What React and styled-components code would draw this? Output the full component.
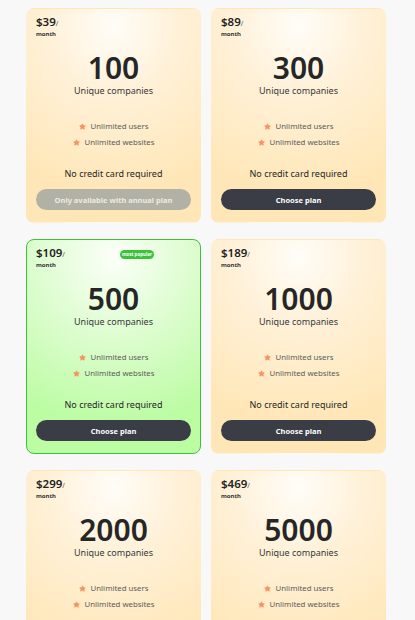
import React from "react";
import styled, { createGlobalStyle } from "styled-components";

const GlobalStyle = createGlobalStyle`
  body {
    margin: 0;
    background: #f8f8f8;
    font-family: "Noto Sans", "Open Sans", sans-serif;
    color: #2a2a2a;
  }
`;

const Grid = styled.div`
  display: grid;
  grid-template-columns: repeat(2, 175px);
  column-gap: 10px;
  row-gap: 16px;
  padding: 8px 0 20px 26px;
`;

const Card = styled.div`
  position: relative;
  height: 215px;
  box-sizing: border-box;
  border-radius: 8px;
  padding: 6px 9px 12px;
  display: flex;
  flex-direction: column;
  border: 1px solid ${(p) => (p.$popular ? "#3dc23a" : "transparent")};
  background: ${(p) =>
    p.$popular
      ? "radial-gradient(ellipse 95% 80% at 50% 8%, #fbfff8 0%, #e2fdd6 40%, #bcfca3 100%)"
      : "radial-gradient(ellipse 95% 80% at 50% 8%, #fffdf8 0%, #fff1d8 40%, #ffe6b6 100%)"};
`;

const Price = styled.div`
  font-size: 11.5px;
  font-weight: 600;
  line-height: 14px;
  color: #222;

  span {
    font-size: 7px;
    font-weight: 400;
    color: #555;
  }
`;

const Period = styled.div`
  font-size: 6px;
  font-weight: 700;
  line-height: 7px;
  color: #333;
`;

const Badge = styled.div`
  position: absolute;
  top: 10px;
  left: 93px;
  width: 34px;
  height: 9px;
  border-radius: 5px;
  background: #3cc13a;
  color: #fff;
  font-size: 4.5px;
  font-weight: 700;
  line-height: 9px;
  text-align: center;
`;

const Amount = styled.div`
  margin-top: 14px;
  font-size: 30px;
  font-weight: 600;
  line-height: 32px;
  text-align: center;
  color: #262626;
`;

const Caption = styled.div`
  margin-top: 1px;
  font-size: 9px;
  line-height: 12px;
  text-align: center;
  color: #383838;
`;

const Features = styled.ul`
  list-style: none;
  margin: 21px 0 0;
  padding: 0;
`;

const Feature = styled.li`
  display: flex;
  justify-content: center;
  align-items: center;
  gap: 5px;
  font-size: 7.8px;
  line-height: 16px;
  color: #5b5b5b;
`;

const Note = styled.div`
  margin-top: 17px;
  font-size: 9px;
  line-height: 14px;
  text-align: center;
  color: #262626;
`;

const Button = styled.button`
  flex-shrink: 0;
  margin-top: 8px;
  height: 21px;
  border: none;
  border-radius: 11px;
  font-family: inherit;
  font-size: 7.5px;
  font-weight: 700;
  background: ${(p) => (p.disabled ? "#b2b1a6" : "#3a3d45")};
  color: ${(p) => (p.disabled ? "#eceae2" : "#fff")};
`;

const Star = () => (
  <svg width="7" height="7" viewBox="0 0 24 24">
    <path
      d="M12 3l3 6 6.5 1-4.7 4.6 1.2 6.4L12 18l-6 3 1.2-6.4L2.5 10 9 9z"
      fill="#f79263"
      stroke="#f79263"
      strokeWidth="3"
      strokeLinejoin="round"
    />
  </svg>
);

const plans = [
  { price: 39, count: 100, annualOnly: true },
  { price: 89, count: 300 },
  { price: 109, count: 500, popular: true },
  { price: 189, count: 1000 },
  { price: 299, count: 2000 },
  { price: 469, count: 5000 },
];

function Plan({ plan }) {
  return (
    <Card $popular={plan.popular}>
      <Price>
        ${plan.price}
        <span>/</span>
      </Price>
      <Period>month</Period>
      {plan.popular && <Badge>most popular</Badge>}
      <Amount>{plan.count}</Amount>
      <Caption>Unique companies</Caption>
      <Features>
        <Feature>
          <Star />
          Unlimited users
        </Feature>
        <Feature>
          <Star />
          Unlimited websites
        </Feature>
      </Features>
      <Note>No credit card required</Note>
      {plan.annualOnly ? (
        <Button disabled>Only available with annual plan</Button>
      ) : (
        <Button>Choose plan</Button>
      )}
    </Card>
  );
}

export default function App() {
  return (
    <>
      <GlobalStyle />
      <Grid>
        {plans.map((p) => (
          <Plan key={p.count} plan={p} />
        ))}
      </Grid>
    </>
  );
}
